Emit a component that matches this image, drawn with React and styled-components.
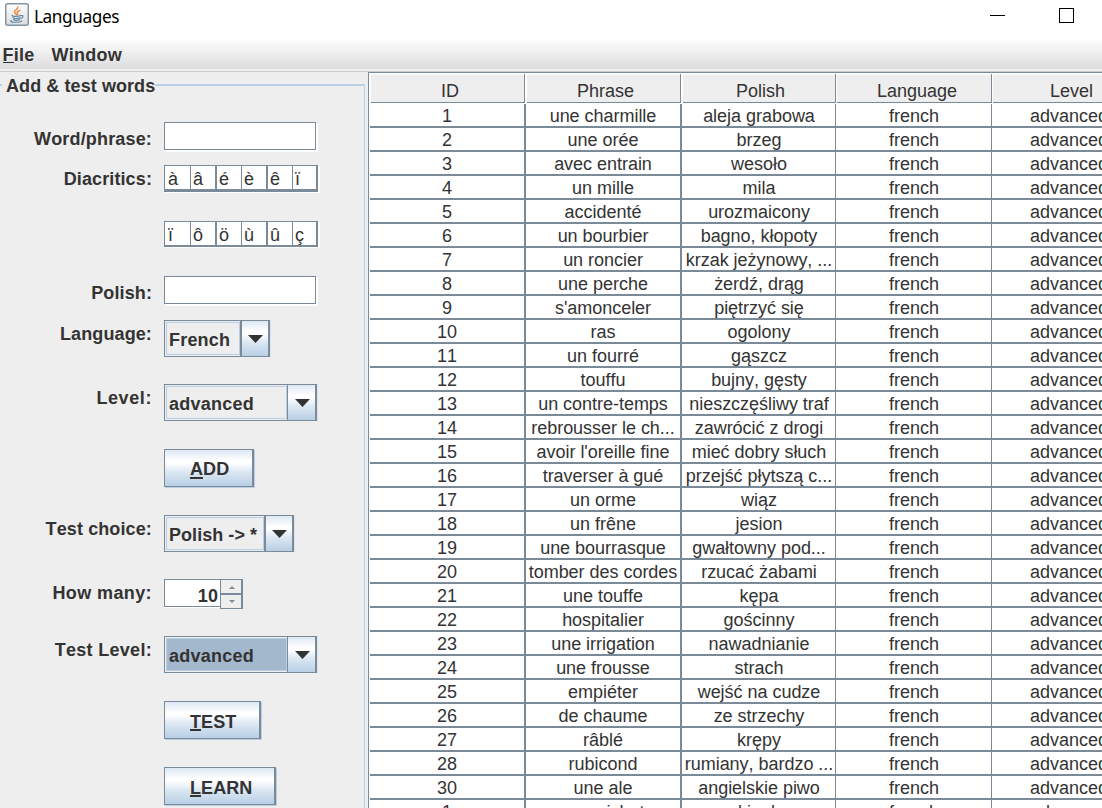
import React from 'react';
import styled, { createGlobalStyle } from 'styled-components';

const Global = createGlobalStyle`
  * { box-sizing: border-box; }
  body { margin: 0; background: #eee; overflow: hidden; }
`;

const steel = '#7a8a99';
const pale = '#b8cfe5';
const sheen = 'linear-gradient(#dde8f3 0%, #fff 30%, #fff 36%, #dde8f3 60%, #b8cfe5 100%)';

const Window = styled.div`
  width: 1102px;
  height: 808px;
  overflow: hidden;
  display: flex;
  flex-direction: column;
  background: #eee;
  color: #333;
  font: 18px/20px 'Liberation Sans', Arial, sans-serif;
  font-kerning: none;
`;

const TitleBar = styled.header`
  height: 38px;
  flex: none;
  display: flex;
  align-items: flex-start;
  background: #fff;
  padding-left: 5px;
`;
const AppIcon = styled.svg`
  margin-top: 3px;
  width: 24px;
  height: 23px;
  flex: none;
`;
const WindowName = styled.h1`
  margin: 5px 0 0 5px;
  flex: 1;
  color: #000;
  font: 400 17.2px/24px 'Noto Sans', 'Open Sans', sans-serif;
  letter-spacing: -0.4px;
`;
const WindowControls = styled.svg`
  width: 112px;
  height: 38px;
  flex: none;
`;

const MenuBar = styled.nav`
  height: 34px;
  flex: none;
  display: flex;
  gap: 17px;
  padding: 7px 0 0 2.5px;
  font-weight: 700;
  letter-spacing: 0.25px;
  background: linear-gradient(#fff, #dcdcdc) 0 0 / 100% 31px no-repeat, #eee;
  border-bottom: 1px solid #ccc;
`;
const Mnemonic = styled.span`
  display: inline-block;
  height: ${(p) => p.$drop || 18}px;
  border-bottom: ${(p) => p.$weight || 1}px solid #333;
`;

const Body = styled.main`
  flex: 1;
  min-height: 0;
  display: flex;
`;

const Panel = styled.section`
  width: 368px;
  flex: none;
  font-weight: 700;
  letter-spacing: 0.08px;
`;
const Legend = styled.h2`
  margin: 0;
  height: 50px;
  padding-top: 4px;
  display: flex;
  align-items: flex-start;
  font: inherit;
  font-kerning: none;
  white-space: nowrap;
  &::before {
    content: '';
    width: 2px;
    margin: 8px 4px 0 0;
    border-top: 2px solid ${pale};
  }
  &::after {
    content: '';
    flex: 1;
    height: 42px;
    margin: 8px 3px 0 0;
    border-top: 2px solid ${pale};
    border-right: 1px solid ${pale};
  }
`;
const Form = styled.div`
  width: 365px;
  height: 700px;
  border-right: 1px solid ${pale};
`;
const Row = styled.div`
  display: flex;
  align-items: flex-start;
  height: ${(p) => p.$height}px;
`;
const Label = styled.label`
  width: 152px;
  margin-right: 12px;
  padding-top: ${(p) => p.$drop || 4}px;
  letter-spacing: ${(p) => p.$track || 0.12}px;
  text-align: right;
  white-space: nowrap;
`;
const TextField = styled.div`
  width: 152px;
  height: 28px;
  background: #fff;
  border: 1px solid ${steel};
  box-shadow: 1px 1px 0 #fff, 2px 2px 0 #fff;
`;
const Keys = styled.div`
  display: flex;
  width: 154px;
  height: ${(p) => p.$height}px;
  background: #fff;
  border: 1px solid ${steel};
  border-right-width: 2px;
  border-bottom-width: ${(p) => p.$base}px;
  box-shadow: 1px 1px 0 #fff, 2px 1px 0 #fff;
  font-weight: 400;
  letter-spacing: 0;
`;
const Key = styled.span`
  width: ${(p) => p.$width}px;
  padding: 3px 0 0 ${(p) => p.$inset}px;
  border-right: ${(p) => p.$edge}px solid ${steel};
  line-height: 20px;
`;
const Combo = styled.div`
  display: flex;
  width: ${(p) => p.$width}px;
  height: 37px;
  border: 1px solid ${steel};
  border-right-width: 2px;
  box-shadow: 1px 0 0 #dbe5ef;
`;
const ComboValue = styled.div`
  flex: 1;
  margin: 1px 0 1px 1px;
  padding: 7px 0 0 2px;
  border: 1px solid ${pale};
  background: ${(p) => (p.$active ? '#a3b8cc' : '#eee')};
  letter-spacing: ${(p) => p.$track}px;
  white-space: nowrap;
`;
const ComboArrow = styled.div`
  width: ${(p) => p.$width}px;
  padding: 14px 0 0 ${(p) => 8 - p.$edge}px;
  border-left: ${(p) => p.$edge}px solid ${steel};
  background: ${sheen};
  svg { display: block; }
`;
const Button = styled.div`
  width: ${(p) => p.$width}px;
  height: 38px;
  padding: ${(p) => p.$lead}px 0 0 25px;
  border: 1px solid ${steel};
  border-right-width: 2px;
  background: ${sheen};
  box-shadow: 1px 1px 0 ${pale};
`;
const Spinner = styled.div`
  display: flex;
  width: 79px;
  height: 30px;
`;
const SpinnerValue = styled.div`
  width: 56px;
  height: 28px;
  padding: 6px 2px 0 0;
  text-align: right;
  background: #fff;
  border: solid ${steel};
  border-width: 1px 0 1px 1px;
  box-shadow: 0 1px 0 #fff;
`;
const SpinnerButtons = styled.div`
  width: 23px;
  border: 1px solid ${steel};
  border-right-width: 2px;
`;
const Step = styled.div`
  height: ${(p) => (p.$up ? 15 : 13)}px;
  padding: ${(p) => (p.$up ? 6 : 5)}px 0 0 8px;
  border-bottom: ${(p) => (p.$up ? 2 : 0)}px solid ${steel};
  svg { display: block; }
`;

const TableFrame = styled.section`
  flex: 1;
  min-width: 0;
  overflow: hidden;
  border: solid ${steel};
  border-width: 1px 0 0 1px;
  background: #fff;
  padding-left: 1px;
  letter-spacing: -0.03px;
`;
const columns = '156px 156px 154px 156px 156px';
const HeaderRow = styled.div`
  display: grid;
  grid-template-columns: ${columns};
  height: 31px;
  padding: 1px 0 1px;
`;
const HeaderCell = styled.div`
  margin: 0 ${(p) => p.$gap}px 0 1px;
  padding: 7px 0 0 ${(p) => p.$indent}px;
  background: #eee;
  border: solid ${steel};
  border-width: 0 1px 1px 0;
  text-align: center;
  box-shadow: inset 0 1px 0 #f8f8f8;
`;
const TableRow = styled.div`
  display: grid;
  grid-template-columns: ${columns};
  height: 24px;
  border-bottom: 2px solid ${steel};
`;
const Cell = styled.div`
  padding: 2px ${(p) => p.$trail || 0}px 0 ${(p) => p.$indent || 0}px;
  height: 24px;
  border-right: ${(p) => p.$edge}px solid ${steel};
  text-align: center;
  white-space: nowrap;
`;

const headings = [
  ['ID', 1, 5],
  ['Phrase', 1, 4],
  ['Polish', 0, 3],
  ['Language', 0, 6],
  ['Level', 0, 3],
];

const entries = [
  ['1', 'une charmille', 'aleja grabowa'],
  ['2', 'une orée', 'brzeg'],
  ['3', 'avec entrain', 'wesoło'],
  ['4', 'un mille', 'mila'],
  ['5', 'accidenté', 'urozmaicony'],
  ['6', 'un bourbier', 'bagno, kłopoty'],
  ['7', 'un roncier', 'krzak jeżynowy, ...'],
  ['8', 'une perche', 'żerdź, drąg'],
  ['9', "s'amonceler", 'piętrzyć się'],
  ['10', 'ras', 'ogolony'],
  ['11', 'un fourré', 'gąszcz'],
  ['12', 'touffu', 'bujny, gęsty'],
  ['13', 'un contre-temps', 'nieszczęśliwy traf'],
  ['14', 'rebrousser le ch...', 'zawrócić z drogi'],
  ['15', "avoir l'oreille fine", 'mieć dobry słuch'],
  ['16', 'traverser à gué', 'przejść płytszą c...'],
  ['17', 'un orme', 'wiąz'],
  ['18', 'un frêne', 'jesion'],
  ['19', 'une bourrasque', 'gwałtowny pod...'],
  ['20', 'tomber des cordes', 'rzucać żabami'],
  ['21', 'une touffe', 'kępa'],
  ['22', 'hospitalier', 'gościnny'],
  ['23', 'une irrigation', 'nawadnianie'],
  ['24', 'une frousse', 'strach'],
  ['25', 'empiéter', 'wejść na cudze'],
  ['26', 'de chaume', 'ze strzechy'],
  ['27', 'râblé', 'krępy'],
  ['28', 'rubicond', 'rumiany, bardzo ...'],
  ['30', 'une ale', 'angielskie piwo'],
  ['1', 'un guichet', 'okienko'],
];

const keySlots = [[26, 1, 3], [26, 2, 2], [25, 1, 2], [26, 2, 2], [25, 1, 2], [23, 0, 2]];

function KeyStrip({ letters, height, base }) {
  return (
    <Keys $height={height} $base={base}>
      {letters.map((c, i) => (
        <Key key={i} $width={keySlots[i][0]} $edge={keySlots[i][1]} $inset={keySlots[i][2]}>{c}</Key>
      ))}
    </Keys>
  );
}

function ComboBox({ value, width, arrow, edge, active, track = 0.1 }) {
  return (
    <Combo $width={width}>
      <ComboValue $active={active} $track={track}>{value}</ComboValue>
      <ComboArrow $width={arrow} $edge={edge}>
        <svg width="15" height="8"><path d="M0 0H15L7.5 8Z" fill="#333" /></svg>
      </ComboArrow>
    </Combo>
  );
}

function PushButton({ text, width, lead = 10, drop = 19 }) {
  return (
    <Button $width={width} $lead={lead}>
      <Mnemonic $drop={drop} $weight={2}>{text[0]}</Mnemonic>{text.slice(1)}
    </Button>
  );
}

export default function App() {
  return (
    <Window>
      <Global />
      <TitleBar>
        <AppIcon viewBox="0 0 24 23">
          <defs>
            <linearGradient id="tile" x1="0" y1="0" x2="0" y2="1">
              <stop offset="0" stopColor="#fff" />
              <stop offset="1" stopColor="#dcdcdc" />
            </linearGradient>
          </defs>
          <rect x="0.75" y="0.75" width="22.5" height="21.5" rx="2" fill="url(#tile)" stroke="#8295a5" strokeWidth="1.5" />
          <g fill="none" strokeLinecap="round">
            <path d="M12.8 4C13.5 6.3 9 7 9.5 9C9.7 10 11 10.5 11.2 11.5M14.8 7.3C12.5 8.3 11.7 9 12.5 10.2C13 11 12.8 11.4 12.2 12" stroke="#ee853d" strokeWidth="1.4" />
            <path d="M7.5 12.3C5 13.3 13 14 15.8 12.5M15.8 12.7C19 11.7 18.5 14.8 15.8 15.4M8 14.5C8.5 15.8 12.5 15.8 15 14.7M8.6 16.5C9.5 17.6 12.5 17.5 14.4 16.6M6.3 17.6C3.5 19.4 13 20 17 18" stroke="#6189a8" strokeWidth="1.2" />
          </g>
        </AppIcon>
        <WindowName>Languages</WindowName>
        <WindowControls>
          <path d="M0 15.5H15" stroke="#000" />
          <rect x="69.5" y="8.5" width="14" height="14" fill="none" stroke="#000" />
        </WindowControls>
      </TitleBar>
      <MenuBar>
        <span><Mnemonic>F</Mnemonic>ile</span>
        <span>Window</span>
      </MenuBar>
      <Body>
        <Panel>
          <Legend>Add &amp; test words</Legend>
          <Form>
            <Row $height={43}><Label $drop={7} $track={0.16}>Word/phrase:</Label><TextField /></Row>
            <Row $height={56}><Label>Diacritics:</Label><KeyStrip letters={['à', 'â', 'é', 'è', 'ê', 'ï']} height={27} base={3} /></Row>
            <Row $height={55}><Label /><KeyStrip letters={['ï', 'ô', 'ö', 'ù', 'û', 'ç']} height={26} base={2} /></Row>
            <Row $height={44}><Label $drop={7}>Polish:</Label><TextField /></Row>
            <Row $height={64}><Label>Language:</Label><ComboBox value="French" width={106} arrow={28} edge={2} track={0.2} /></Row>
            <Row $height={65}><Label $track={0.6}>Level:</Label><ComboBox value="advanced" width={153} arrow={28} edge={1} track={0.25} /></Row>
            <Row $height={66}><Label /><PushButton text="ADD" width={90} lead={9} drop={20} /></Row>
            <Row $height={64}><Label>Test choice:</Label><ComboBox value="Polish -> *" width={130} arrow={28} edge={2} track={0.05} /></Row>
            <Row $height={57}>
              <Label $track={0.4}>How many:</Label>
              <Spinner>
                <SpinnerValue>10</SpinnerValue>
                <SpinnerButtons>
                  <Step $up><svg width="6" height="3"><path d="M0 3L3 0L6 3Z" fill={steel} /></svg></Step>
                  <Step><svg width="6" height="3"><path d="M0 0H6L3 3Z" fill={steel} /></svg></Step>
                </SpinnerButtons>
              </Spinner>
            </Row>
            <Row $height={65}><Label $track={0.3}>Test Level:</Label><ComboBox value="advanced" width={153} arrow={28} edge={1} active track={0.25} /></Row>
            <Row $height={66}><Label /><PushButton text="TEST" width={97} /></Row>
            <Row $height={41}><Label /><PushButton text="LEARN" width={112} /></Row>
          </Form>
        </Panel>
        <TableFrame>
          <HeaderRow>
            {headings.map(([name, gap, indent]) => (
              <HeaderCell key={name} $gap={gap} $indent={indent}>{name}</HeaderCell>
            ))}
          </HeaderRow>
          {entries.map(([id, phrase, polish], i) => (
            <TableRow key={i}>
              <Cell $edge={2}>{id}</Cell>
              <Cell $edge={2}>{phrase}</Cell>
              <Cell $edge={1} $indent={1}>{polish}</Cell>
              <Cell $edge={1} $indent={1}>french</Cell>
              <Cell $edge={1} $trail={1}>advanced</Cell>
            </TableRow>
          ))}
        </TableFrame>
      </Body>
    </Window>
  );
}
